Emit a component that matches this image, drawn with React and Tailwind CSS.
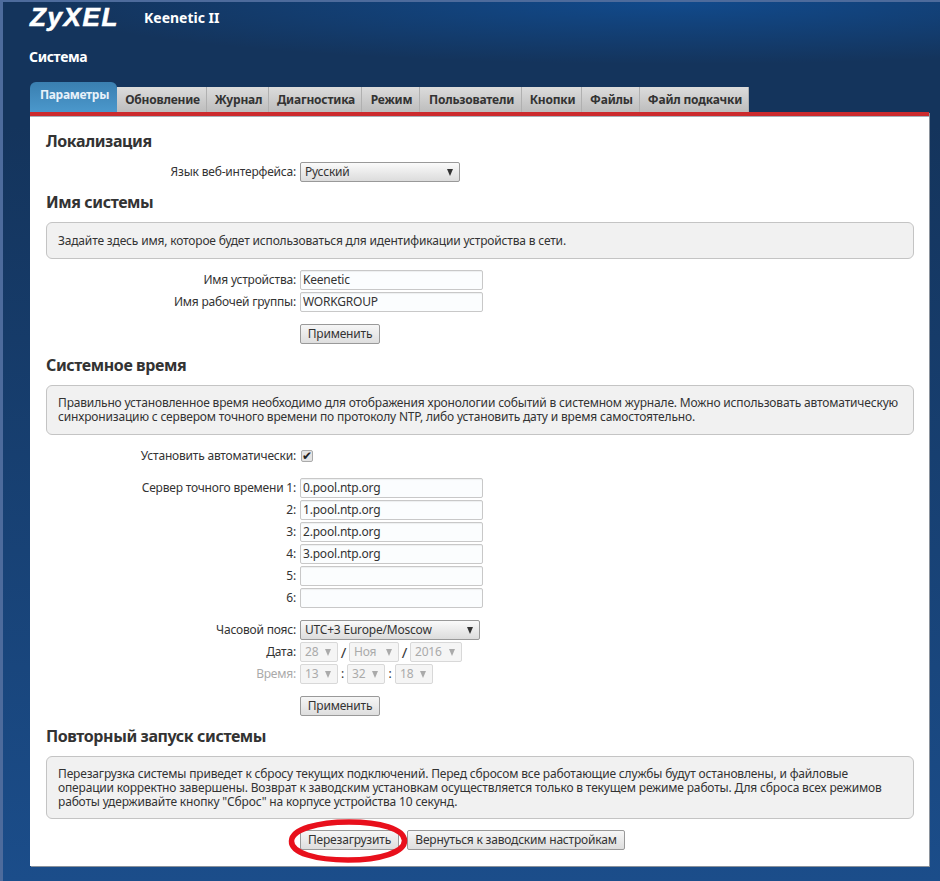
import React from 'react';

const tabs = [
  ['Обновление', 'w-[90px]'],
  ['Журнал', 'w-[62px]'],
  ['Диагностика', 'w-[93px]'],
  ['Режим', 'w-[58px]'],
  ['Пользователи', 'w-[102px]'],
  ['Кнопки', 'w-[60px]'],
  ['Файлы', 'w-[58px]'],
  ['Файл подкачки', 'w-[109px]'],
];

const Heading = ({ children, className = '' }) => (
  <h2 className={`text-[16px] leading-5 font-bold tracking-[-0.4px] text-[#333] ${className}`}>{children}</h2>
);

const Note = ({ children, className = '' }) => (
  <div className={`mt-[10px] pl-[11px] pr-[10px] rounded-[6px] border border-[#c4c4c4] bg-[#f1f1f1] text-[12px] leading-[14px] tracking-[-0.17px] text-[#333] flex items-center ${className}`}>
    <p>{children}</p>
  </div>
);

const Row = ({ label, muted, children, className = '' }) => (
  <div className={`flex items-center h-5 ${className}`}>
    <label className={`w-[250px] text-right text-[12px] tracking-[-0.2px] ${muted ? 'text-[#aaa]' : 'text-[#333]'}`}>{label}</label>
    <div className="ml-1 flex items-center">{children}</div>
  </div>
);

const Field = ({ value = '' }) => (
  <input
    readOnly
    value={value}
    className="w-[183px] h-5 px-[2px] pb-px rounded-[2px] border border-[#c8c8c8] bg-[#fbfdfe] text-[12px] tracking-[-0.2px] text-[#333] shadow-[inset_0_1px_1px_rgba(0,0,0,0.06)] outline-none"
  />
);

const Select = ({ value, width, disabled }) => (
  <div
    className={`${width} h-5 pl-1 pr-[6px] flex items-center justify-between rounded-[2px] border text-[12px] tracking-[-0.2px] ${
      disabled
        ? 'border-[#d8d8d8] bg-[#f5f5f5] text-[#aaa]'
        : 'border-[#999] bg-gradient-to-b from-[#fafafa] to-[#dcdcdc] text-[#333]'
    }`}
  >
    <span>{value}</span>
    <span className={`w-0 h-0 border-l-[3.5px] border-r-[3.5px] border-t-[7px] border-l-transparent border-r-transparent ${disabled ? 'border-t-[#aaa]' : 'border-t-[#333]'}`} />
  </div>
);

const Btn = ({ children, className = '' }) => (
  <button className={`h-5 rounded-[2px] border border-[#999] bg-gradient-to-b from-[#f6f6f6] to-[#dedede] text-[12px] tracking-[-0.2px] text-[#333] ${className}`}>
    {children}
  </button>
);

export default function App() {
  return (
    <div
      className="w-[940px] h-[881px] overflow-hidden border-l-[3px] border-t-2 border-[#4d6b9c] bg-[radial-gradient(ellipse_640px_62px_at_72%_0,#114a8c,transparent),linear-gradient(to_bottom,#14345c,#14345c_14%,#1b4d8a)] text-[#333]"
      style={{ fontFamily: '"Noto Sans", "Open Sans", sans-serif' }}
    >
      <header className="h-[80px] pl-[27px] text-white">
        <div className="flex items-center h-[28px] pt-[2px]">
          <span className="w-[90px] text-[26px] leading-none font-bold italic tracking-[1.6px] [-webkit-text-stroke:0.6px_white]" style={{ fontFamily: '"Liberation Sans", sans-serif' }}>
            ZyXEL
          </span>
          <span className="ml-[24px] text-[14px] font-bold">Keenetic II</span>
        </div>
        <h1 className="mt-[17px] -ml-[1px] text-[14px] leading-5 font-bold tracking-[-0.4px]">Система</h1>
      </header>

      <nav className="ml-[27px] flex items-end h-[30px] text-[12px] font-bold tracking-[-0.2px]">
        <div className="w-[87px] h-[30px] pb-[4px] pl-[2px] flex items-center justify-center rounded-t-[6px] bg-gradient-to-b from-[#3a7fb0] to-[#4b98cc] tracking-[-0.3px] text-[#e8f2fa]">
          Параметры
        </div>
        {tabs.map(([name, width]) => (
          <div key={name} className={`${width} h-[25px] pl-[2px] flex items-center justify-center border-r border-[#b0b0b0] bg-gradient-to-b from-[#dcdcdc] to-[#bdbdbd] text-[#333]`}>
            {name}
          </div>
        ))}
      </nav>

      <main className="relative ml-[27px] w-[899px] h-[754px] border-t-4 border-[#cc2a2d] bg-white pl-[16px] pr-[15px] pt-[15px] shadow-[inset_0_1px_0_#a9b0ba,1px_1px_0_#8a929c]">
        <Heading>Локализация</Heading>
        <Row className="mt-[11px]" label="Язык веб-интерфейса:">
          <Select value="Русский" width="w-[160px]" />
        </Row>

        <Heading className="mt-[10px]">Имя системы</Heading>
        <Note className="h-[37px]">Задайте здесь имя, которое будет использоваться для идентификации устройства в сети.</Note>
        <Row className="mt-[11px]" label="Имя устройства:"><Field value="Keenetic" /></Row>
        <Row className="mt-[2px]" label="Имя рабочей группы:"><Field value="WORKGROUP" /></Row>
        <Row className="mt-[12px]" label=""><Btn className="w-[80px]">Применить</Btn></Row>

        <Heading className="mt-[11px]">Системное время</Heading>
        <Note className="h-[50px]">
          Правильно установленное время необходимо для отображения хронологии событий в системном журнале. Можно использовать автоматическую синхронизацию с сервером точного времени по протоколу NTP, либо установить дату и время самостоятельно.
        </Note>
        <Row className="mt-[11px]" label="Установить автоматически:">
          <span className="ml-[1px] w-[12px] h-[12px] flex items-center justify-center rounded-[2px] border border-[#aaa] bg-[#e4e4e4] text-[12px] leading-none text-[#222]">✔</span>
        </Row>
        <Row className="mt-[12px]" label="Сервер точного времени 1:"><Field value="0.pool.ntp.org" /></Row>
        <Row className="mt-[2px]" label="2:"><Field value="1.pool.ntp.org" /></Row>
        <Row className="mt-[2px]" label="3:"><Field value="2.pool.ntp.org" /></Row>
        <Row className="mt-[2px]" label="4:"><Field value="3.pool.ntp.org" /></Row>
        <Row className="mt-[2px]" label="5:"><Field /></Row>
        <Row className="mt-[2px]" label="6:"><Field /></Row>
        <Row className="mt-[12px]" label="Часовой пояс:"><Select value="UTC+3 Europe/Moscow" width="w-[180px]" /></Row>
        <Row className="mt-[2px]" label="Дата:">
          <Select value="28" width="w-[38px]" disabled />
          <span className="w-[11px] text-center text-[15px] leading-none">/</span>
          <Select value="Ноя" width="w-[50px]" disabled />
          <span className="w-[11px] text-center text-[15px] leading-none">/</span>
          <Select value="2016" width="w-[52px]" disabled />
        </Row>
        <Row className="mt-[2px]" label="Время:" muted>
          <Select value="13" width="w-[38px]" disabled />
          <span className="w-[9px] text-center text-[12px]">:</span>
          <Select value="32" width="w-[38px]" disabled />
          <span className="w-[10px] text-center text-[12px]">:</span>
          <Select value="18" width="w-[38px]" disabled />
        </Row>
        <Row className="mt-[12px]" label=""><Btn className="w-[80px]">Применить</Btn></Row>

        <Heading className="mt-[10px]">Повторный запуск системы</Heading>
        <Note className="h-[63px]">
          Перезагрузка системы приведет к сбросу текущих подключений. Перед сбросом все работающие службы будут остановлены, и файловые операции корректно завершены. Возврат к заводским установкам осуществляется только в текущем режиме работы. Для сброса всех режимов работы удерживайте кнопку "Сброс" на корпусе устройства 10 секунд.
        </Note>
        <Row className="mt-[11px]" label="">
          <Btn className="w-[99px]">Перезагрузить</Btn>
          <Btn className="ml-[8px] w-[218px]">Вернуться к заводским настройкам</Btn>
        </Row>

        {/* hand-drawn marker around the reboot button */}
        <svg className="absolute left-[258px] top-[703px] pointer-events-none" width="120" height="44" viewBox="0 0 120 44" fill="none">
          <path d="M3.5 22C4 10 30 3 61 3c31 0 55 7 55.500 18.500C117 33 92 41 60 41 28 41 3 34 3.500 22Z" stroke="#e8101c" strokeWidth="5.500" />
        </svg>
      </main>
    </div>
  );
}
